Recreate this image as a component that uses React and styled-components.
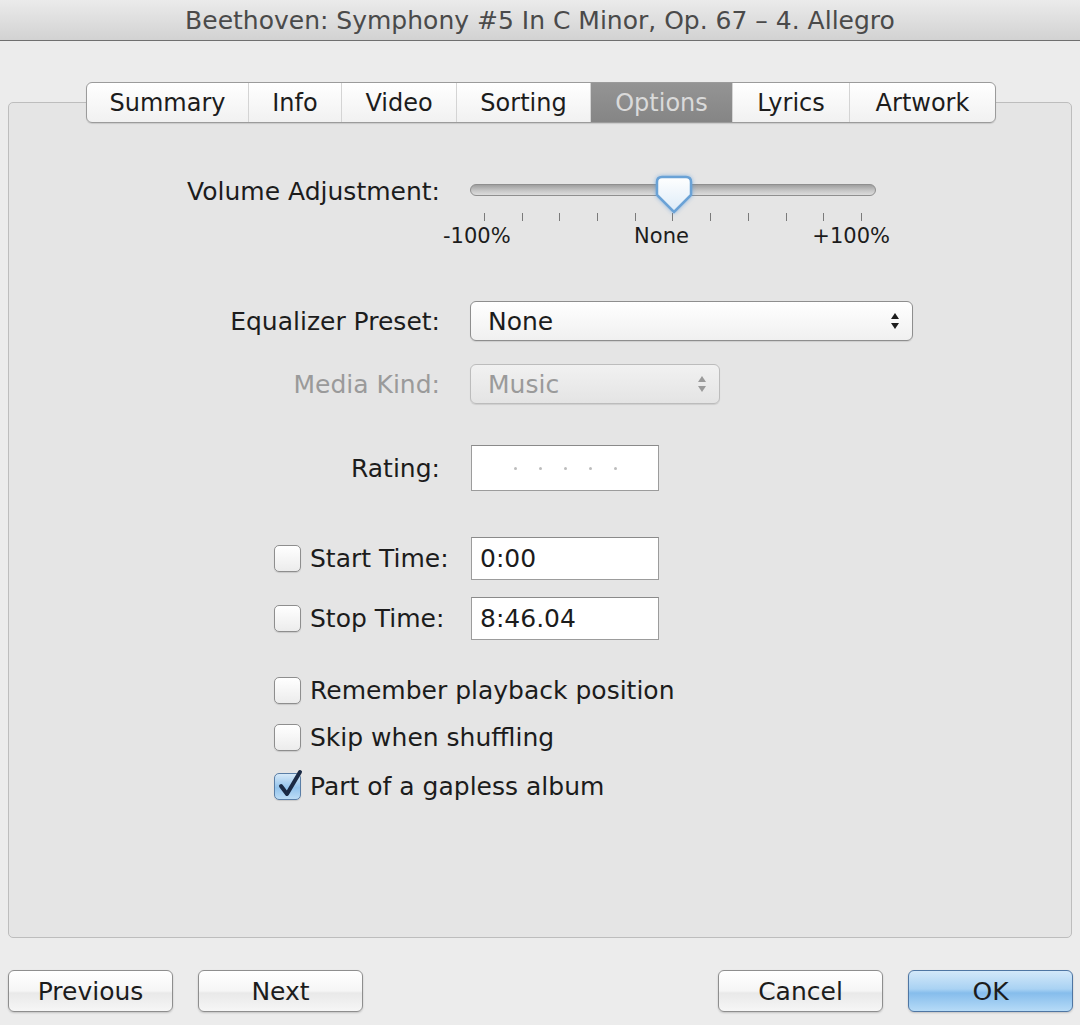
import styled, { createGlobalStyle } from "styled-components";

const Global = createGlobalStyle`
  html, body {
    margin: 0;
    padding: 0;
    background: #ececec;
  }
  body {
    font-family: "DejaVu Sans", "Liberation Sans", sans-serif;
    color: #1c1c1c;
  }
`;

const Window = styled.div`
  width: 1080px;
  height: 1025px;
  display: flex;
  flex-direction: column;
  background: #ececec;
  overflow: hidden;
`;

const TitleBar = styled.div`
  height: 40px;
  flex: none;
  display: flex;
  align-items: center;
  justify-content: center;
  background: linear-gradient(#ebebeb, #d2d2d2);
  border-bottom: 1px solid #6f6f6f;
  color: #4a4a4a;
  font-size: 25px;
`;

const Body = styled.div`
  flex: 1;
  display: flex;
  flex-direction: column;
  padding: 41px 7px 0 8px;
`;

const TabStrip = styled.div`
  position: relative;
  z-index: 1;
  display: flex;
  margin-left: 78px;
  height: 39px;
  align-self: flex-start;
  border: 1px solid #9b9b9b;
  border-radius: 6px;
  overflow: hidden;
  background: linear-gradient(#ffffff, #f1f1f1);
  box-shadow: 0 1px 1px rgba(0, 0, 0, 0.12);
`;

const Tab = styled.div`
  width: ${(p) => p.$w}px;
  box-sizing: border-box;
  display: flex;
  align-items: center;
  justify-content: center;
  font-size: 24px;
  color: ${(p) => (p.$active ? "#dadada" : "#1c1c1c")};
  background: ${(p) => (p.$active ? "linear-gradient(#949494, #858585)" : "transparent")};
  & + & {
    border-left: 1px solid ${(p) => (p.$active ? "#7a7a7a" : "#d4d4d4")};
  }
`;

const Panel = styled.div`
  margin-top: -21px;
  margin-right: 1px;
  height: 836px;
  box-sizing: border-box;
  border: 1px solid #bdbdbd;
  border-radius: 5px;
  background: #e5e5e5;
  padding-top: 74px;
  display: flex;
  flex-direction: column;
`;

const Row = styled.div`
  display: flex;
  align-items: ${(p) => p.$align || "center"};
  gap: 30px;
  margin-top: ${(p) => p.$top || 0}px;
`;

const LabelCell = styled.div`
  width: 431px;
  flex: none;
  display: flex;
  align-items: center;
  justify-content: ${(p) => (p.$left ? "flex-start" : "flex-end")};
  padding-left: ${(p) => (p.$left ? 265 : 0)}px;
  box-sizing: border-box;
  gap: 9px;
  font-size: 25px;
  white-space: nowrap;
  color: ${(p) => (p.$disabled ? "#9a9a9a" : "#1c1c1c")};
  height: ${(p) => p.$lh || 30}px;
`;

const CheckRow = styled.div`
  display: flex;
  align-items: center;
  gap: 9px;
  padding-left: 265px;
  margin-top: ${(p) => p.$top}px;
  height: 27px;
  font-size: 25px;
`;

/* slider */
const Slider = styled.div`
  width: 406px;
  display: flex;
  flex-direction: column;
`;

const TrackWrap = styled.div`
  position: relative;
  height: 36px;
  padding-top: 7px;
  box-sizing: border-box;
`;

const Track = styled.div`
  height: 10px;
  border: 1px solid #8f8f8f;
  border-radius: 6px;
  background: linear-gradient(#9f9f9f, #c9c9c9 60%, #dcdcdc);
`;

const Thumb = styled.svg`
  position: absolute;
  left: 204px;
  top: -3px;
  transform: translateX(-50%);
  filter: drop-shadow(0 0 2px rgba(80, 150, 220, 0.6));
`;

const Ticks = styled.div`
  display: flex;
  justify-content: space-between;
  padding: 0 14px;
  height: 8px;
`;

const Tick = styled.span`
  width: 1px;
  height: 8px;
  background: #7a7a7a;
`;

const TickLabels = styled.div`
  display: flex;
  justify-content: space-between;
  margin: 3px -14px 0 -27px;
  font-size: 21px;
  color: #1c1c1c;
`;

/* popups and fields */
const Select = styled.div`
  width: ${(p) => p.$w}px;
  height: 40px;
  box-sizing: border-box;
  display: flex;
  align-items: center;
  justify-content: space-between;
  padding: 0 12px 0 17px;
  border: 1px solid ${(p) => (p.$disabled ? "#bcbcbc" : "#8e8e8e")};
  border-radius: 6px;
  background: ${(p) =>
    p.$disabled ? "linear-gradient(#f1f1f1, #e4e4e4)" : "linear-gradient(#ffffff, #f0f0f0)"};
  box-shadow: 0 1px 1px rgba(0, 0, 0, 0.1);
  font-size: 25px;
  color: ${(p) => (p.$disabled ? "#9a9a9a" : "#1c1c1c")};
`;

const Field = styled.div`
  width: ${(p) => p.$w || 188}px;
  height: ${(p) => p.$h || 43}px;
  box-sizing: border-box;
  display: flex;
  align-items: center;
  justify-content: ${(p) => (p.$center ? "center" : "flex-start")};
  gap: 22px;
  padding-left: ${(p) => (p.$center ? 0 : 8)}px;
  background: #ffffff;
  border: 1px solid #9c9c9c;
  border-top-color: #8a8a8a;
  font-size: 25px;
  color: #1c1c1c;
  margin-left: 1px;
`;

const Dot = styled.span`
  width: 3px;
  height: 3px;
  border-radius: 50%;
  background: #bdbdbd;
`;

const Box = styled.div`
  width: 27px;
  height: 27px;
  flex: none;
  box-sizing: border-box;
  border: 1px solid ${(p) => (p.$checked ? "#5a7ea6" : "#8e8e8e")};
  border-radius: 5px;
  background: ${(p) =>
    p.$checked
      ? "linear-gradient(#d6e9f8, #93c3ec 55%, #bcdcf5)"
      : "linear-gradient(#ffffff, #ececec)"};
  box-shadow: 0 1px 1px rgba(0, 0, 0, 0.12);
  position: relative;
`;

const Tickmark = styled.svg`
  position: absolute;
  left: 2px;
  top: -5px;
`;

/* bottom buttons */
const ButtonBar = styled.div`
  display: flex;
  align-items: center;
  gap: 25px;
  margin-top: 32px;
`;

const Spacer = styled.div`
  flex: 1;
`;

const Button = styled.div`
  width: 165px;
  height: 42px;
  box-sizing: border-box;
  display: flex;
  align-items: center;
  justify-content: center;
  border-radius: 6px;
  font-size: 25px;
  color: #1c1c1c;
  border: 1px solid ${(p) => (p.$primary ? "#4f76a3" : "#8e8e8e")};
  background: ${(p) =>
    p.$primary
      ? "linear-gradient(#d3e8f9, #a9d2f3 45%, #86bdec 55%, #b6dbf7)"
      : "linear-gradient(#ffffff, #f5f5f5 50%, #e9e9e9 55%, #f6f6f6)"};
  box-shadow: 0 1px 2px rgba(0, 0, 0, 0.18);
`;

const Stepper = () => (
  <svg width="10" height="20" viewBox="0 0 10 20">
    <path d="M5 2 L9 8 H1 Z" fill="currentColor" />
    <path d="M5 18 L9 12 H1 Z" fill="currentColor" />
  </svg>
);

const CheckBox = ({ checked }) => (
  <Box $checked={checked}>
    {checked && (
      <Tickmark width="28" height="30" viewBox="0 0 28 30">
        <path
          d="M4 17 L10 25 L23 3"
          fill="none"
          stroke="#1b2a44"
          strokeWidth="4"
          strokeLinecap="round"
          strokeLinejoin="round"
        />
      </Tickmark>
    )}
  </Box>
);

const tabs = [
  ["Summary", 161],
  ["Info", 93],
  ["Video", 115],
  ["Sorting", 134],
  ["Options", 142],
  ["Lyrics", 117],
  ["Artwork", 146],
];

export default function App() {
  return (
    <Window>
      <Global />
      <TitleBar>Beethoven: Symphony #5 In C Minor, Op. 67 – 4. Allegro</TitleBar>
      <Body>
        <TabStrip>
          {tabs.map(([name, w]) => (
            <Tab key={name} $w={w} $active={name === "Options"}>
              {name}
            </Tab>
          ))}
        </TabStrip>
        <Panel>
          <Row $align="flex-start">
            <LabelCell $lh={28}>Volume Adjustment:</LabelCell>
            <Slider>
              <TrackWrap>
                <Track />
                <Thumb width="40" height="42" viewBox="0 0 40 42">
                  <defs>
                    <linearGradient id="thumbFill" x1="0" y1="0" x2="0" y2="1">
                      <stop offset="0" stopColor="#ffffff" />
                      <stop offset="1" stopColor="#dcebf8" />
                    </linearGradient>
                  </defs>
                  <path
                    d="M8 3 H32 Q37 3 37 8 V21 L20 38 L3 21 V8 Q3 3 8 3 Z"
                    fill="url(#thumbFill)"
                    stroke="#6aa2d6"
                    strokeWidth="2.5"
                  />
                </Thumb>
              </TrackWrap>
              <Ticks>
                {Array.from({ length: 11 }, (_, i) => (
                  <Tick key={i} />
                ))}
              </Ticks>
              <TickLabels>
                <span>-100%</span>
                <span>None</span>
                <span>+100%</span>
              </TickLabels>
            </Slider>
          </Row>

          <Row $top={53}>
            <LabelCell>Equalizer Preset:</LabelCell>
            <Select $w={443}>
              None
              <Stepper />
            </Select>
          </Row>

          <Row $top={23}>
            <LabelCell $disabled>Media Kind:</LabelCell>
            <Select $w={250} $disabled>
              Music
              <Stepper />
            </Select>
          </Row>

          <Row $top={41}>
            <LabelCell>Rating:</LabelCell>
            <Field $h={46} $center>
              {Array.from({ length: 5 }, (_, i) => (
                <Dot key={i} />
              ))}
            </Field>
          </Row>

          <Row $top={46}>
            <LabelCell $left>
              <CheckBox />
              Start Time:
            </LabelCell>
            <Field>0:00</Field>
          </Row>

          <Row $top={17}>
            <LabelCell $left>
              <CheckBox />
              Stop Time:
            </LabelCell>
            <Field>8:46.04</Field>
          </Row>

          <CheckRow $top={37}>
            <CheckBox />
            Remember playback position
          </CheckRow>
          <CheckRow $top={20}>
            <CheckBox />
            Skip when shuffling
          </CheckRow>
          <CheckRow $top={22}>
            <CheckBox checked />
            Part of a gapless album
          </CheckRow>
        </Panel>

        <ButtonBar>
          <Button>Previous</Button>
          <Button>Next</Button>
          <Spacer />
          <Button>Cancel</Button>
          <Button $primary>OK</Button>
        </ButtonBar>
      </Body>
    </Window>
  );
}
